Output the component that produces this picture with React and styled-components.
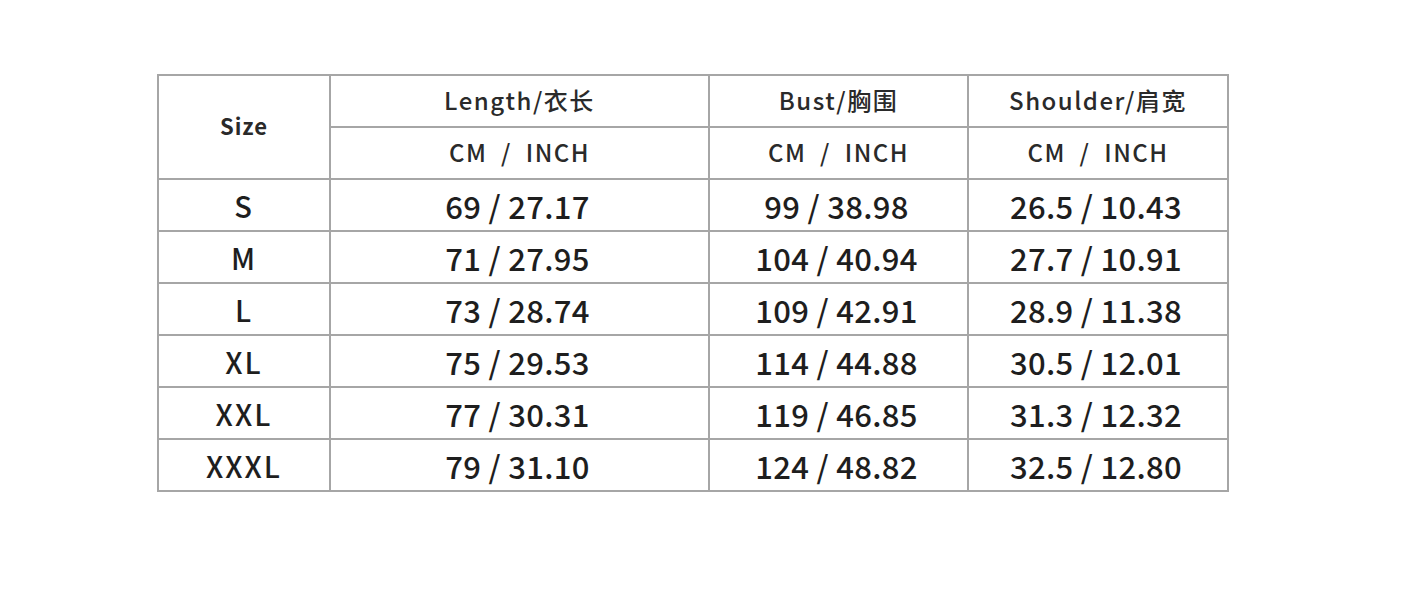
import styled, { createGlobalStyle } from "styled-components";

const Global = createGlobalStyle`
  html, body {
    margin: 0;
    background: #ffffff;
  }
  body {
    font-family: "Noto Sans CJK SC", "Noto Sans", sans-serif;
    color: #1e1e1e;
  }
`;

const Page = styled.div`
  width: 1405px;
  height: 600px;
  padding: 74px 0 0 157px;
  box-sizing: border-box;
`;

const Table = styled.table`
  border-collapse: collapse;
  table-layout: fixed;
  width: 1072px;
`;

const Col = styled.col`
  width: ${(p) => p.$w}px;
`;

const Cell = styled.td`
  border: 2px solid #a6a6a6;
  height: 50px;
  padding: 0 4px 0 0;
  text-align: center;
  vertical-align: middle;
  font-size: 31px;
  font-weight: 500;
  letter-spacing: 0.3px;
  line-height: 1;
  white-space: pre;
`;

const SizeCell = styled(Cell)`
  padding: 0;
  font-size: 29px;
  letter-spacing: 2px;
`;

const SizeHead = styled(Cell)`
  height: auto;
  padding: 0 0 4px 0;
  font-size: 22px;
  font-weight: 700;
  letter-spacing: 1px;
  color: #2a2a2a;
`;

const HeadCell = styled(Cell)`
  height: 48px;
  padding: 0 0 2px 0;
  font-size: 24px;
  font-weight: 500;
  letter-spacing: 1.5px;
  color: #2a2a2a;
`;

const widths = [172, 379, 259, 260];

const columns = ["Length/衣长", "Bust/胸围", "Shoulder/肩宽"];

const rows = [
  ["S", "69 / 27.17", "99 / 38.98", "26.5 / 10.43"],
  ["M", "71 / 27.95", "104 / 40.94", "27.7 / 10.91"],
  ["L", "73 / 28.74", "109 / 42.91", "28.9 / 11.38"],
  ["XL", "75 / 29.53", "114 / 44.88", "30.5 / 12.01"],
  ["XXL", "77 / 30.31", "119 / 46.85", "31.3 / 12.32"],
  ["XXXL", "79 / 31.10", "124 / 48.82", "32.5 / 12.80"],
];

export default function App() {
  return (
    <Page>
      <Global />
      <Table>
        <colgroup>
          {widths.map((w, i) => (
            <Col key={i} $w={w} />
          ))}
        </colgroup>
        <tbody>
          <tr>
            <SizeHead rowSpan={2}>Size</SizeHead>
            {columns.map((c) => (
              <HeadCell key={c}>{c}</HeadCell>
            ))}
          </tr>
          <tr>
            {columns.map((c) => (
              <HeadCell key={c}>{"CM  /  INCH"}</HeadCell>
            ))}
          </tr>
          {rows.map(([size, ...values]) => (
            <tr key={size}>
              <SizeCell>{size}</SizeCell>
              {values.map((v, i) => (
                <Cell key={i}>{v}</Cell>
              ))}
            </tr>
          ))}
        </tbody>
      </Table>
    </Page>
  );
}
